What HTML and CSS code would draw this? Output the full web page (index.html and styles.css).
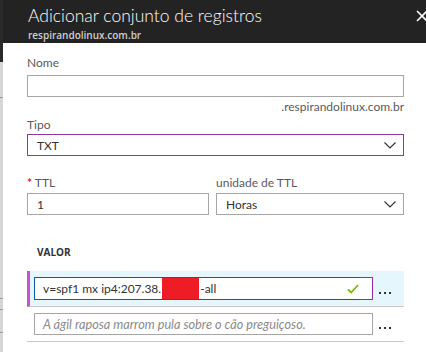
FILE: index.html
```html
<!DOCTYPE html>
<html lang="pt-BR">
<head>
<meta charset="utf-8">
<link rel="stylesheet" href="styles.css">
</head>
<body>
<div class="frame">
  <div class="edge"><span class="edge-top"></span><span class="tick t1"></span><span class="tick t2"></span><span class="tick t3"></span><span class="tick t4"></span></div>
  <div class="panel">
    <header class="head">
      <div class="head-text">
        <h1 class="title">Adicionar conjunto de registros</h1>
        <div class="subtitle">respirandolinux.com.br</div>
      </div>
      <svg class="close" width="12" height="12" viewBox="0 0 12 12"><path d="M1 1L11 11M11 1L1 11" stroke="#fff" stroke-width="1.6" fill="none"/></svg>
    </header>
    <main class="form">
      <div class="label l-nome">Nome</div>
      <div class="box"></div>
      <div class="suffix">.respirandolinux.com.br</div>
      <div class="label l-tipo">Tipo</div>
      <div class="box select purple"><span>TXT</span>
        <svg class="chev" width="12" height="7" viewBox="0 0 12 7"><path d="M0.5 0.5L6 6L11.5 0.5" stroke="#333" stroke-width="1.2" fill="none"/></svg>
      </div>
      <div class="pair">
        <div class="col">
          <div class="label l-ttl"><span class="req">*</span> TTL</div>
          <div class="box"><span>1</span></div>
        </div>
        <div class="col">
          <div class="label l-ttl">unidade de TTL</div>
          <div class="box select"><span>Horas</span>
            <svg class="chev" width="12" height="7" viewBox="0 0 12 7"><path d="M0.5 0.5L6 6L11.5 0.5" stroke="#333" stroke-width="1.2" fill="none"/></svg>
          </div>
        </div>
      </div>
      <div class="section">VALOR</div>
      <div class="row active">
        <div class="vinput">
          <span class="vtext">v=spf1 mx ip4:207.38.<span class="redact"></span>-all</span>
          <span class="ok"><svg width="12" height="10" viewBox="0 0 12 10"><path d="M1 5.5L4.2 8.5L11 1" stroke="#7fba00" stroke-width="1.8" fill="none"/></svg></span>
        </div>
        <div class="more"><i></i><i></i><i></i></div>
      </div>
      <div class="row">
        <div class="vinput plain"><span class="ph">A ágil raposa marrom pula sobre o cão preguiçoso.</span></div>
        <div class="more"><i></i><i></i><i></i></div>
      </div>
    </main>
  </div>
</div>
</body>
</html>
```

FILE: styles.css
```css
* { box-sizing: border-box; }
html, body { margin: 0; padding: 0; }
body {
  width: 426px; height: 352px; overflow: hidden;
  font-family: Lato, "Open Sans", sans-serif;
  background: #fff;
  color: #333;
}
.frame { display: flex; height: 352px; }
.edge {
  position: relative;
  width: 3px; flex: none;
  background: #d6d6d6;
}
.edge-top { display: block; height: 62px; background: #2a2a2a; }
.tick { position: absolute; left: 0; width: 3px; height: 1px; background: #9a9a9a; }
.t1 { top: 97px; } .t2 { top: 298px; } .t3 { top: 309px; } .t4 { top: 332px; }
.panel { flex: 1; display: flex; flex-direction: column; }
.head {
  height: 43px; background: #232323;
  display: flex; justify-content: space-between; align-items: flex-start;
  padding-left: 25px;
}
.title {
  margin: 0; padding-top: 6px;
  font-size: 17.5px; font-weight: 300; color: #fff; line-height: 20px;
}
.subtitle { font-family: "Open Sans", sans-serif; font-size: 10px; font-weight: 600; color: #cfcfcf; line-height: 12px; margin-top: 3px; }
.close { margin-top: 10px; margin-right: -2px; }
.form { padding: 0 22px 0 24px; display: flex; flex-direction: column; }
.label { font-size: 12px; color: #5a5a5a; line-height: 16px; }
.l-nome { margin-top: 12px; margin-bottom: 4px; }
.box {
  height: 22px; border: 1px solid #a6a6a6; background: #fff;
  display: flex; align-items: center; padding-left: 9px;
  font-size: 12px; color: #333;
}
.select { justify-content: space-between; padding-right: 7px; }
.purple { border-color: #8a3aa2; }
.suffix { text-align: right; font-size: 12px; color: #5a5a5a; line-height: 16px; margin-top: 2px; }
.l-tipo { margin-top: 2px; margin-bottom: 1px; }
.chev { display: block; }
.pair { display: grid; grid-template-columns: 182px 1fr; gap: 7px; margin-top: 19px; }
.l-ttl { margin-bottom: 2px; }
.req { color: #e81123; font-weight: 700; }
.section { font-family: "Open Sans", sans-serif; font-size: 10px; font-weight: 700; color: #333; padding-left: 10px; margin-top: 30px; line-height: 14px; }
.row {
  display: flex; align-items: center;
  border-bottom: 1px solid #c8c8c8;
  padding: 6px 0 6px 7px; gap: 4px;
}
.row.active {
  margin-top: 12px;
  background: #e5f6fc;
  border-left: 3px solid #c254d2;
  padding-left: 4px;
}
.vinput {
  flex: none; width: 339px; height: 23px;
  border: 1px solid #0f5aa6;
  border-right: none;
  display: flex; align-items: stretch; background: #fff;
}
.vtext { flex: 1; display: flex; align-items: center; padding-left: 8px; font-size: 12px; color: #333; }
.redact { display: inline-block; width: 37px; height: 21px; background: #ee1c25; margin: 0 1px 0 1px; }
.ok {
  width: 14px; margin: -1px 0; border: 1px solid #8e2fa6; border-left: none;
  display: flex; align-items: center; justify-content: flex-start;
}
.ok svg { margin-left: -12px; }
.vinput.plain { border: 1px solid #a6a6a6; height: 22px; align-items: center; padding-left: 8px; }
.ph { font-style: italic; color: #8a8a8a; font-size: 12.7px; }
.more { display: flex; gap: 3px; padding-left: 2px; margin-top: 8px; }
.more i { width: 2px; height: 2px; background: #333; display: block; }
```
